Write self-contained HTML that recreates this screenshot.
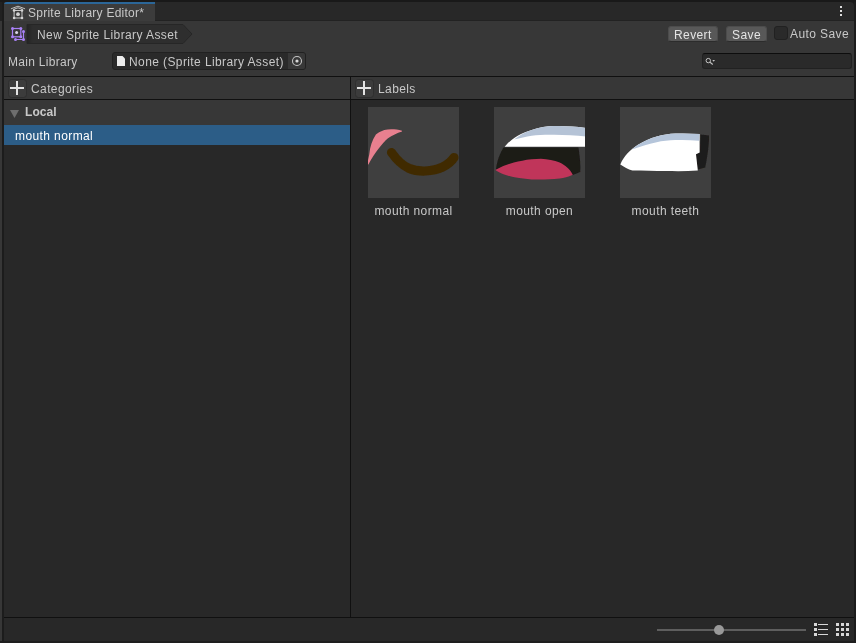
<!DOCTYPE html>
<html><head><meta charset="utf-8">
<style>
html,body{margin:0;padding:0;}
body{width:856px;height:643px;overflow:hidden;background:#191919;position:relative;font-family:"Liberation Sans",sans-serif;font-size:12px;color:#c8c8c8;}
.a{position:absolute;}
.t{position:absolute;white-space:nowrap;line-height:14px;will-change:transform;}
svg{position:absolute;overflow:visible}
</style></head><body>
<!-- outer -->
<div class="a" style="left:0;top:0;width:856px;height:643px;background:#191919"></div><div class="a" style="left:0;top:641px;width:856px;height:2px;background:#1e1e1e"></div>
<div class="a" style="left:0;top:2px;width:2px;height:19px;background:#212121"></div><div class="a" style="left:0;top:21px;width:2px;height:620px;background:#373737"></div>
<div class="a" style="left:2px;top:2px;width:2px;height:639px;background:#1c1c1c"></div>
<div class="a" style="left:854px;top:2px;width:2px;height:639px;background:#1c1c1c"></div>
<!-- tab bar -->
<div class="a" style="left:4px;top:2px;width:850px;height:19px;background:#282828;border-radius:0 4px 0 0"></div><div class="a" style="left:155px;top:20px;width:699px;height:1px;background:#222"></div>
<div class="a" style="left:4px;top:2px;width:151px;height:19px;background:#3c3c3c;border-radius:3px 0 0 0;overflow:hidden"><div class="a" style="left:0;top:0;width:151px;height:2px;background:#2b6698"></div></div>
<!-- toolbar -->
<div class="a" style="left:4px;top:21px;width:850px;height:55px;background:#373737"></div>
<div class="a" style="left:4px;top:76px;width:850px;height:1px;background:#101010"></div>
<!-- headers -->
<div class="a" style="left:4px;top:77px;width:850px;height:22px;background:#373737"></div>
<div class="a" style="left:4px;top:99px;width:850px;height:1px;background:#101010"></div>
<!-- left panel -->
<div class="a" style="left:4px;top:100px;width:346px;height:517px;background:#282828"></div>
<div class="a" style="left:4px;top:100px;width:346px;height:25px;background:#373737"></div>
<div class="a" style="left:4px;top:125px;width:346px;height:20px;background:#2c5d87"></div>
<!-- right panel -->
<div class="a" style="left:351px;top:100px;width:503px;height:517px;background:#282828"></div>
<div class="a" style="left:350px;top:77px;width:1px;height:540px;background:#101010"></div>
<!-- bottom -->
<div class="a" style="left:4px;top:617px;width:850px;height:1px;background:#101010"></div>
<div class="a" style="left:4px;top:618px;width:850px;height:23px;background:#282828"></div>

<!-- tab icon + text -->
<svg style="left:0;top:0" width="40" height="48" fill="none">
 <path d="M11.300 8.700L18 6.200L24.700 8.700M13.500 9.400L18 7.800L22.500 9.400" stroke="#cdcdcd" stroke-width="0.900" stroke-linejoin="round" stroke-linecap="round"/>
 <rect x="14.100" y="10.500" width="7.900" height="7.500" stroke="#c8c8c8" stroke-width="1"/>
 <g fill="#d4d4d4"><circle cx="14.100" cy="10.500" r="1.300"/><circle cx="22" cy="10.500" r="1.300"/><circle cx="14.100" cy="18" r="1.300"/><circle cx="22" cy="18" r="1.300"/><circle cx="18" cy="14.200" r="1.900"/></g>
 <!-- purple asset icon -->
 <rect x="12.500" y="28.500" width="8.300" height="8.300" stroke="#a880f5" stroke-width="1.200"/>
 <path d="M23.500 31.500V39.500H15.500" stroke="#a880f5" stroke-width="1.200"/>
 <g fill="#a880f5"><circle cx="12.500" cy="28.500" r="1.500"/><circle cx="20.800" cy="28.500" r="1.500"/><circle cx="12.500" cy="36.800" r="1.500"/><circle cx="20.800" cy="36.800" r="1.500"/><circle cx="23.500" cy="31.500" r="1.500"/><circle cx="23.500" cy="39.500" r="1.500"/><circle cx="15.500" cy="39.500" r="1.500"/></g>
 <circle cx="16.600" cy="32.600" r="1.500" fill="#ddd6ea"/>
</svg>
<div class="t" style="left:28px;top:6px;letter-spacing:0.25px">Sprite Library Editor*</div>
<!-- kebab -->
<div class="a" style="left:840px;top:6px;width:2px;height:2px;background:#ddd;box-shadow:0 4px 0 #ddd,0 8px 0 #ddd"></div>
<!-- breadcrumb -->
<svg style="left:27px;top:24px" width="168" height="20"><defs><linearGradient id="bg" x1="0" x2="166" y1="0" y2="0" gradientUnits="userSpaceOnUse"><stop offset="0" stop-color="#242424"/><stop offset="0.035" stop-color="#2e2e2e"/></linearGradient></defs><path d="M0 0.500H156L165 10L156 19.500H0Z" fill="url(#bg)" stroke="#262626" stroke-width="1"/></svg>
<div class="t" style="left:37px;top:27.500px;letter-spacing:0.4px">New Sprite Library Asset</div>
<div class="t" style="left:8px;top:54.500px;letter-spacing:0.3px">Main Library</div>
<!-- object field -->
<div class="a" style="left:112px;top:52px;width:194px;height:18px;background:#2a2a2a;border-radius:3px;box-sizing:border-box;border:1px solid #212121"></div>
<div class="a" style="left:288px;top:53px;width:17px;height:16px;background:#383838;border-radius:0 2px 2px 0"></div>
<svg style="left:112px;top:52px" width="194" height="18"><path d="M5 4H10.500L13 6.500V14H5Z" fill="#ececec"/><circle cx="185" cy="9" r="4.500" fill="none" stroke="#c4c4c4" stroke-width="1.100"/><circle cx="185" cy="9" r="1.600" fill="#d8d8d8"/></svg>
<div class="t" style="left:129px;top:54.500px;letter-spacing:0.4px">None (Sprite Library Asset)</div>
<!-- buttons -->
<div class="a" style="left:668px;top:26px;width:50px;height:16px;background:#585858;border-radius:3px;box-sizing:border-box;border:1px solid #4c4c4c;border-bottom-color:#2c2c2c"></div>
<div class="t" style="left:674px;top:27.500px;letter-spacing:0.4px;color:#e4e4e4">Revert</div>
<div class="a" style="left:726px;top:26px;width:41px;height:16px;background:#585858;border-radius:3px;box-sizing:border-box;border:1px solid #4c4c4c;border-bottom-color:#2c2c2c"></div>
<div class="t" style="left:732px;top:27.500px;letter-spacing:0.4px;color:#e4e4e4">Save</div>
<div class="a" style="left:774px;top:26px;width:14px;height:14px;background:#2a2a2a;border-radius:3px;box-sizing:border-box;border:1px solid #212121"></div>
<div class="t" style="left:790px;top:26.500px;letter-spacing:0.4px">Auto Save</div>
<!-- search -->
<div class="a" style="left:702px;top:53px;width:150px;height:16px;background:#2a2a2a;border-radius:3px;box-sizing:border-box;border:1px solid #212121;border-top-color:#0d0d0d"></div>
<svg style="left:702px;top:53px" width="20" height="16"><circle cx="6.300" cy="7.600" r="2.200" fill="none" stroke="#c4c4c4" stroke-width="1"/><path d="M8 9.300L10.800 11.500" stroke="#c4c4c4" stroke-width="1.100"/><path d="M10.300 7H13L11.650 8.700Z" fill="#c4c4c4"/></svg>
<!-- header plus buttons -->
<div class="a" style="left:7.500px;top:78.500px;width:19px;height:19px;background:#3c3c3c;border-radius:3.500px;box-sizing:border-box;border:1px solid #2f2f2f"></div>
<div class="a" style="left:10px;top:87px;width:14px;height:2px;background:#e4e4e4"></div><div class="a" style="left:16px;top:81px;width:2px;height:14px;background:#e4e4e4"></div>
<div class="a" style="left:354.500px;top:78.500px;width:19px;height:19px;background:#3c3c3c;border-radius:3.500px;box-sizing:border-box;border:1px solid #2f2f2f"></div>
<div class="a" style="left:357px;top:87px;width:14px;height:2px;background:#e4e4e4"></div><div class="a" style="left:363px;top:81px;width:2px;height:14px;background:#e4e4e4"></div>
<div class="t" style="left:31px;top:81.500px;letter-spacing:0.4px">Categories</div>
<div class="t" style="left:378px;top:81.500px;letter-spacing:0.4px">Labels</div>
<svg style="left:0;top:100px" width="30" height="25"><path d="M10 10H19L14.500 18Z" fill="#6e6e6e"/></svg>
<div class="t" style="left:25px;top:105px;letter-spacing:0.05px;font-weight:bold">Local</div>
<div class="t" style="left:15px;top:128.500px;letter-spacing:0.4px;color:#fff">mouth normal</div>
<!-- thumbs -->
<div class="a" style="left:368px;top:107px;width:91px;height:91px;background:#3f3f3f"></div>
<div class="a" style="left:494px;top:107px;width:91px;height:91px;background:#3f3f3f"></div>
<div class="a" style="left:620px;top:107px;width:91px;height:91px;background:#3f3f3f"></div>

<svg style="left:0;top:0" width="856" height="643">
<defs><filter id="b" x="-10%" y="-10%" width="120%" height="120%"><feGaussianBlur stdDeviation="0.6"/></filter>
<clipPath id="c1"><rect x="368" y="107" width="91" height="91"/></clipPath>
<clipPath id="c2"><rect x="494" y="107" width="91" height="91"/></clipPath>
<clipPath id="c3"><rect x="620" y="107" width="91" height="91"/></clipPath></defs>
<g clip-path="url(#c1)"><g filter="url(#b)">
<path d="M402 130.800C396 129 389 129 384.300 130C380 131.500 377.500 133 375.900 134.500C372 140 370 147 369.300 154.200L367 165L368.400 164.400C372 158 375 153 378.700 148.600C382 144 385 141 388 138.300C392 135.500 397 133 402 131.500Z" fill="#e8808f"/>
<path d="M391.500 152.500C396 159 402 165 408.600 168.200C414 170.500 420 171.200 425.400 171C431 170.500 437 169.500 442.200 167.200C447 165 451.500 161.500 454 157.500" fill="none" stroke="#402b00" stroke-width="9.200" stroke-linecap="round"/>
</g></g>
<g clip-path="url(#c2)"><g filter="url(#b)">
<path d="M503.500 147.500H578.500C579.500 156 581 164 580.200 171.900L572.800 175L496 169.500C497 161 500 153 503.500 147.500Z" fill="#1c1a19"/>
<path d="M504.600 146.700C512 138 521 133 531.700 129.900C539 127.500 547 126.300 554.100 126.100C564 125.800 575 126.500 586 128V146.700Z" fill="#ffffff"/>
<path d="M514 139.500C519 135.500 525 132 531.700 129.900C539 127.500 547 126.300 554.100 126.100C564 125.800 575 126.500 586 128V136.600C575 135.200 562 134.500 550.400 134.700C543 134.800 537 135 531.700 135.700C526 136.500 520 138 514 139.500Z" fill="#b5c3d6"/>
<path d="M495.300 170C503 165.500 512 162.500 522.300 160.700C528 159.500 535 158.800 541 158.800C548 159 554 160.500 559.700 162.600C565 165 570 169.500 572.800 174.700C568 177 564 178 559.700 178.400C550 179.500 541 179.600 531.700 179.400C523 179 515 177.800 507.400 175.600C503 174.300 499 172.500 495.300 170Z" fill="#c0355a"/>
</g></g>
<g clip-path="url(#c3)"><g filter="url(#b)">
<path d="M700.500 134.500L709 135.500C709 142 708.500 148 707.500 154.200C706.800 159 706 163.500 705.200 167.600L697.800 169.500L695.500 154.500L700 152.500Z" fill="#1e1b1a"/>
<path d="M620.300 164.400C624 156 630 150 638 144.800C644 141 650 138.300 656.700 136.400C663 134.700 669 133.900 675.400 133.600C683 133.300 691 133.500 699.600 134L699.600 152.500L696 154.200L697.800 170.500C687 171.300 676 171.200 666 171C655 171 643 170.900 632.400 170.600C628 169 624 167 620.300 164.400Z" fill="#ffffff"/>
<path d="M632 149.500C634 147.500 636 146 638 144.800C644 141 650 138.300 656.700 136.400C663 134.700 669 133.900 675.400 133.600C683 133.300 691 133.500 699.600 134L699.200 140.800C691 140 683 139.800 675.400 140.100C669 140.400 662 141 656.700 142.200C648 144 640 146.500 632 149.500Z" fill="#b5c5da"/>
</g></g>
</svg>
<div class="t" style="left:363px;top:203.500px;width:101px;text-align:center;letter-spacing:0.4px">mouth normal</div>
<div class="t" style="left:489px;top:203.500px;width:101px;text-align:center;letter-spacing:0.4px">mouth open</div>
<div class="t" style="left:615px;top:203.500px;width:101px;text-align:center;letter-spacing:0.4px">mouth teeth</div>
<!-- bottom bar -->
<div class="a" style="left:657px;top:629px;width:149px;height:2px;background:#5e5e5e"></div>
<div class="a" style="left:714px;top:625px;width:10px;height:10px;border-radius:5px;background:#999"></div>
<svg style="left:0;top:0" width="856" height="643" fill="#d8d8d8">
 <rect x="814" y="623" width="3" height="3"/><rect x="814" y="628" width="3" height="3"/><rect x="814" y="633" width="3" height="3"/>
 <rect x="818" y="624" width="10" height="1"/><rect x="818" y="629" width="10" height="1"/><rect x="818" y="634" width="10" height="1"/>
 <rect x="836" y="623" width="3" height="3"/><rect x="841" y="623" width="3" height="3"/><rect x="846" y="623" width="3" height="3"/>
 <rect x="836" y="628" width="3" height="3"/><rect x="841" y="628" width="3" height="3"/><rect x="846" y="628" width="3" height="3"/>
 <rect x="836" y="633" width="3" height="3"/><rect x="841" y="633" width="3" height="3"/><rect x="846" y="633" width="3" height="3"/>
</svg>
</body></html>
